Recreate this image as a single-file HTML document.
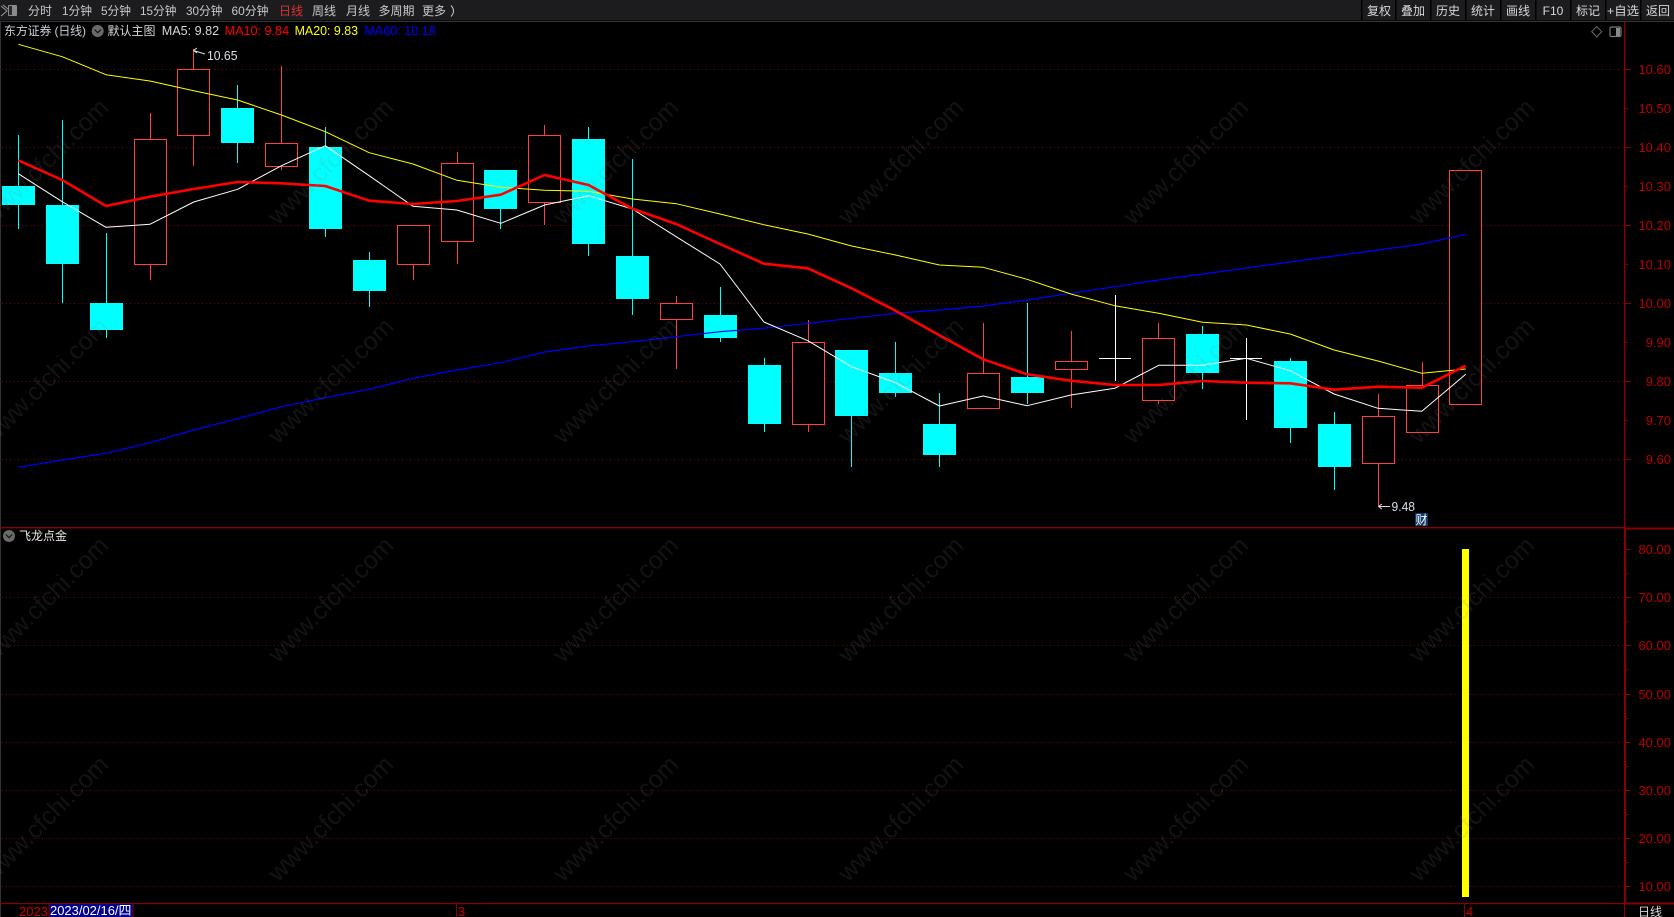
<!DOCTYPE html>
<html lang="zh"><head><meta charset="utf-8"><title>东方证券</title>
<style>
html,body{margin:0;padding:0;background:#000;width:1674px;height:917px;overflow:hidden}
svg{display:block;font-family:"Liberation Sans","Noto Sans CJK SC",sans-serif}
.g{stroke:#800000;stroke-width:1;stroke-dasharray:1 3;fill:none}
.c{fill:#0ff}.w{stroke:#0ff;stroke-width:1;fill:none}
.r{fill:#000;stroke:#ff4040;stroke-width:1}.rw{stroke:#ff4040;stroke-width:1;fill:none}
.ax{fill:#b80000;font-size:13px;text-anchor:end}
.m{fill:#c8c8c8;font-size:12px}
.b{fill:#d8d8d8;font-size:12px;text-anchor:middle}
.wm{fill:#808080;fill-opacity:.15;font-size:25px;text-anchor:end;font-family:"Liberation Sans",sans-serif}
</style></head><body>
<svg xmlns="http://www.w3.org/2000/svg" width="1674" height="917" viewBox="0 0 1674 917">
<rect width="1674" height="917" fill="#000"/>
<rect x="0" y="0" width="1674" height="20" fill="#1c1c1f"/>
<rect x="0" y="20" width="1674" height="1" fill="#0c0c0c"/>
<rect x="0" y="21" width="1674" height="1" fill="#333"/>
<rect x="0" y="22" width="1" height="895" fill="#333"/>

<!-- top bar -->
<path d="M1 6 L7 11 L1 16 M3 5 L8 9" stroke="#999" stroke-width="1" fill="none"/>
<rect x="8" y="5" width="9" height="11" rx="1" fill="#8a8a8a"/><rect x="9" y="6" width="3" height="9" fill="#2a2a2a"/>
<g class="m">
<text x="28" y="15">分时</text>
<text x="62" y="15" textLength="30" lengthAdjust="spacingAndGlyphs">1分钟</text>
<text x="101" y="15" textLength="30" lengthAdjust="spacingAndGlyphs">5分钟</text>
<text x="140" y="15" textLength="36.5" lengthAdjust="spacingAndGlyphs">15分钟</text>
<text x="186" y="15" textLength="36.5" lengthAdjust="spacingAndGlyphs">30分钟</text>
<text x="231.5" y="15" textLength="37" lengthAdjust="spacingAndGlyphs">60分钟</text>
<text x="279" y="15" style="fill:#e03030">日线</text>
<text x="312" y="15">周线</text>
<text x="346" y="15">月线</text>
<text x="378.5" y="15">多周期</text>
<text x="422" y="15">更多</text>
</g>
<path d="M451 5.5 Q456 11 451 16.5" stroke="#c8c8c8" fill="none"/>
<g fill="#000">
<rect x="1361" y="0" width="1.5" height="20"/><rect x="1395" y="0" width="1.5" height="20"/><rect x="1430" y="0" width="1.5" height="20"/><rect x="1465" y="0" width="1.5" height="20"/><rect x="1500" y="0" width="1.5" height="20"/><rect x="1535" y="0" width="1.5" height="20"/><rect x="1570" y="0" width="1.5" height="20"/><rect x="1605" y="0" width="1.5" height="20"/><rect x="1640" y="0" width="1.5" height="20"/>
</g>
<g class="b">
<text x="1379" y="15">复权</text><text x="1413" y="15">叠加</text><text x="1448" y="15">历史</text><text x="1483" y="15">统计</text><text x="1518" y="15">画线</text><text x="1553" y="15">F10</text><text x="1588" y="15">标记</text><text x="1623" y="15" textLength="32" lengthAdjust="spacingAndGlyphs">+自选</text><text x="1658" y="15">返回</text>
</g>

<!-- grid -->
<g class="g">
<path d="M2 69.5H1624M2 147.5H1624M2 225.5H1624M2 303.5H1624M2 381.5H1624M2 459.5H1624"/>
<path d="M2 597.5H1624M2 645.5H1624M2 694.5H1624M2 742.5H1624M2 790.5H1624M2 838.5H1624M2 886.5H1624"/>
</g>

<!-- cyan candles -->
<g class="w">
<path d="M18.5 135V229M62.5 120V303M106.5 233V338M237.5 85V163M325.5 127V237M369.5 252V307M500.5 170V229M588.5 127V256M632.5 159V315M720.5 287V342M764.5 358V432M851.5 350V467M895.5 342V397M939.5 393V467M1027.5 303V404M1202.5 326V389M1290.5 358V443M1334.5 412V490"/>
</g>
<g class="c">
<rect x="2" y="186" width="33" height="19"/><rect x="46" y="205" width="33" height="59"/><rect x="90" y="303" width="33" height="27"/><rect x="221" y="108" width="33" height="35"/><rect x="309" y="147" width="33" height="82"/><rect x="353" y="260" width="33" height="31"/><rect x="484" y="170" width="33" height="39"/><rect x="572" y="139" width="33" height="105"/><rect x="616" y="256" width="33" height="43"/><rect x="704" y="315" width="33" height="23"/><rect x="748" y="365" width="33" height="59"/><rect x="835" y="350" width="33" height="66"/><rect x="879" y="373" width="33" height="20"/><rect x="923" y="424" width="33" height="31"/><rect x="1011" y="377" width="33" height="16"/><rect x="1186" y="334" width="33" height="39"/><rect x="1274" y="361" width="33" height="67"/><rect x="1318" y="424" width="33" height="43"/>
</g>

<!-- red candles -->
<g class="rw">
<path d="M150.5 113V280M193.5 49V166M281.5 66V170M413.5 225V280M457.5 152V264M544.5 125V225M676.5 296V369M808.5 320V432M983.5 323V409M1071.5 331V408M1158.5 323V404M1378.5 394V507M1422.5 362V433"/>
</g>
<g class="r">
<rect x="134.5" y="139.5" width="32" height="125"/><rect x="177.5" y="69.5" width="32" height="66"/><rect x="265.5" y="143.5" width="32" height="23"/><rect x="397.5" y="225.5" width="32" height="39"/><rect x="441.5" y="163.5" width="32" height="78"/><rect x="528.5" y="135.5" width="32" height="67"/><rect x="660.5" y="303.5" width="32" height="16"/><rect x="792.5" y="342.5" width="32" height="82"/><rect x="967.5" y="373.5" width="32" height="35"/><rect x="1055.5" y="361.5" width="32" height="8"/><rect x="1142.5" y="338.5" width="32" height="62"/><rect x="1362.5" y="416.5" width="32" height="47"/><rect x="1406.5" y="385.5" width="32" height="47"/><rect x="1449.5" y="170.5" width="32" height="234"/>
</g>

<!-- doji -->
<path d="M1115.5 295V381M1099 358.5H1131M1246.5 338V420M1230 358.5H1262" stroke="#fff" fill="none"/>

<!-- MA lines -->
<g fill="none" stroke-linejoin="round">
<polyline stroke="#0000ff" stroke-width="1.2" points="18.3,467.3 62.2,460 106,453.3 149.9,442.7 193.7,430 237.6,418.7 281.5,406.7 325.3,397.7 369.2,389.3 413,378.3 456.9,370 500.8,362.7 544.6,352 588.5,346 632.3,341.7 676.2,336.7 720,331.7 763.9,328.3 807.8,323.3 851.6,318.3 895.5,313.3 939.4,310 983.2,306 1027.1,300 1070.9,293.3 1114.8,286.7 1158.7,280 1202.5,274 1246.4,268 1290.2,262 1334.1,256 1378,250 1421.8,244 1465.7,234.3"/>
<polyline stroke="#ffff00" stroke-width="1" points="18.3,44.3 62.2,56.7 106,74.7 149.9,81 193.7,90.7 237.6,100 281.5,115 325.3,131.7 369.2,152.7 413,164 456.9,180.3 500.8,187.3 544.6,190.3 588.5,191.3 632.3,199 676.2,203.7 720,214 763.9,224.7 807.8,234 851.6,246 895.5,255 939.4,265 983.2,267.3 1027.1,279.3 1070.9,294 1114.8,305.7 1158.7,313.3 1202.5,322.3 1246.4,325 1290.2,334 1334.1,350 1378,361 1421.8,373.3 1465.7,369"/>
<polyline stroke="#ffffff" stroke-width="1" points="18.3,173.7 62.2,201.7 106,227.3 149.9,224.3 193.7,202 237.6,189.3 281.5,165.7 325.3,145.7 369.2,175.7 413,206.3 456.9,210 500.8,223.3 544.6,205 588.5,195.7 632.3,209 676.2,236.7 720,264 763.9,322 807.8,340.7 851.6,366.7 895.5,382.7 939.4,406 983.2,396 1027.1,405.7 1070.9,395 1114.8,388.3 1158.7,365.3 1202.5,365.3 1246.4,358.3 1290.2,370.7 1334.1,394 1378,408.3 1421.8,411.3 1465.7,374.3"/>
<polyline stroke="#ff0000" stroke-width="2.6" points="18.3,160.3 62.2,180 106,206 149.9,196.7 193.7,189 237.6,182 281.5,183.3 325.3,186 369.2,200.7 413,204 456.9,201 500.8,194.7 544.6,175 588.5,185 632.3,208.7 676.2,224 720,244 763.9,263.7 807.8,268.3 851.6,288.3 895.5,310.7 939.4,335.3 983.2,359.3 1027.1,374.3 1070.9,380.7 1114.8,385 1158.7,385 1202.5,381 1246.4,382.7 1290.2,383.3 1334.1,389.7 1378,386.7 1421.8,387.7 1465.7,365.7"/>
</g>

<!-- high/low markers -->
<path d="M205 54 L193.5 50.5 M193.5 50.5 L197 48 M193.5 50.5 L197 53" stroke="#ddd" fill="none"/>
<text x="207" y="60" fill="#d8e0e8" font-size="13" textLength="30.5" lengthAdjust="spacingAndGlyphs">10.65</text>
<path d="M1378.5 506.5H1390M1378.5 506.5L1382 504M1378.5 506.5L1382 509" stroke="#ddd" fill="none"/>
<text x="1391.5" y="511" fill="#d8e0e8" font-size="13" textLength="23.5" lengthAdjust="spacingAndGlyphs">9.48</text>
<rect x="1415" y="513" width="13" height="13" fill="#10386a"/>
<text x="1415.5" y="524" fill="#fff" font-size="12">财</text>

<!-- yellow bar -->
<rect x="1462" y="549" width="7" height="348" fill="#ffff00"/>

<!-- info rows -->
<g font-size="12">
<text x="4" y="35" fill="#c8d0d8" textLength="82" lengthAdjust="spacing">东方证券 (日线)</text>
<circle cx="97.7" cy="31" r="6" fill="#6a6a6a"/><path d="M94.5 29.5L97.7 32.7L101 29.5" stroke="#111" stroke-width="1.2" fill="none"/>
<text x="107.5" y="35" fill="#d8d8d8">默认主图</text>
<text x="161.7" y="35" fill="#d8d8d8" font-size="13" textLength="57.5" lengthAdjust="spacingAndGlyphs">MA5: 9.82</text>
<text x="224.6" y="35" fill="#ff0000" font-size="13" textLength="64.5" lengthAdjust="spacingAndGlyphs">MA10: 9.84</text>
<text x="294.6" y="35" fill="#ffff00" font-size="13" textLength="63.5" lengthAdjust="spacingAndGlyphs">MA20: 9.83</text>
<text x="364.3" y="35" fill="#0000ff" font-size="13" textLength="71.5" lengthAdjust="spacingAndGlyphs">MA60: 10.18</text>
<circle cx="9" cy="536" r="6" fill="#6a6a6a"/><path d="M5.8 534.5L9 537.7L12.2 534.5" stroke="#111" stroke-width="1.2" fill="none"/>
<text x="19" y="540" fill="#e8e8e8">飞龙点金</text>
</g>
<path d="M1596.7 26.5L1601.7 31.7L1596.7 36.9L1591.7 31.7Z" fill="none" stroke="#6a6a6a"/>
<rect x="1610" y="27" width="11" height="9.5" rx="1.5" fill="none" stroke="#7a7a7a" stroke-width="1.2"/><rect x="1616" y="28" width="4" height="8" fill="#8a8a8a"/>

<!-- axes -->
<g fill="#8a0000">
<rect x="1624" y="22" width="1.4" height="506"/>
<rect x="1624" y="528" width="2" height="376"/>
<rect x="1624" y="904" width="1" height="13"/>
<rect x="0" y="527" width="1624" height="1.4"/>
<rect x="1624" y="527.5" width="50" height="2"/>
<rect x="0" y="903" width="1624" height="1.2"/>
<rect x="1624" y="902.5" width="50" height="2"/>
<rect x="456" y="904" width="1" height="13"/>
<rect x="1464" y="904" width="1" height="13"/>
</g>
<path d="M1625 69.5h6M1625 108.5h3M1625 147.5h6M1625 186.5h3M1625 225.5h6M1625 264.5h3M1625 303.5h6M1625 342.5h3M1625 381.5h6M1625 420.5h3M1625 459.5h6M1626 549.5h5M1626 573.5h2M1626 597.5h5M1626 621.5h2M1626 645.5h5M1626 669.5h2M1626 694.5h5M1626 718.5h2M1626 742.5h5M1626 766.5h2M1626 790.5h5M1626 814.5h2M1626 838.5h5M1626 862.5h2M1626 886.5h5" stroke="#8a0000" fill="none"/>
<g class="ax">
<text x="1671" y="74">10.60</text><text x="1671" y="113">10.50</text><text x="1671" y="152">10.40</text><text x="1671" y="191">10.30</text><text x="1671" y="230">10.20</text><text x="1671" y="269">10.10</text><text x="1671" y="308">10.00</text><text x="1671" y="347">9.90</text><text x="1671" y="386">9.80</text><text x="1671" y="425">9.70</text><text x="1671" y="464">9.60</text>
<text x="1671" y="554">80.00</text><text x="1671" y="602">70.00</text><text x="1671" y="650">60.00</text><text x="1671" y="699">50.00</text><text x="1671" y="747">40.00</text><text x="1671" y="795">30.00</text><text x="1671" y="843">20.00</text><text x="1671" y="891">10.00</text>
</g>

<!-- bottom axis -->
<text x="19" y="916" fill="#c80000" font-size="13">2023</text>
<rect x="49" y="904" width="84" height="13" fill="#00008c"/>
<rect x="48.5" y="904" width="1" height="13" fill="#8a0000"/><rect x="132.5" y="904" width="1" height="13" fill="#8a0000"/>
<text x="50" y="915" fill="#fff" font-size="13" textLength="81.5" lengthAdjust="spacingAndGlyphs">2023/02/16/四</text>
<text x="458" y="916" fill="#c80000" font-size="13">3</text>
<text x="1466" y="916" fill="#c80000" font-size="13">4</text>
<text x="1638" y="916" fill="#d8d8d8" font-size="12">日线</text>

<!-- watermark -->
<g class="wm">
<text x="110" y="109" transform="rotate(-45 110 109)">www.cfchi.com</text><text x="395" y="109" transform="rotate(-45 395 109)">www.cfchi.com</text><text x="680" y="109" transform="rotate(-45 680 109)">www.cfchi.com</text><text x="965" y="109" transform="rotate(-45 965 109)">www.cfchi.com</text><text x="1250" y="109" transform="rotate(-45 1250 109)">www.cfchi.com</text><text x="1536" y="109" transform="rotate(-45 1536 109)">www.cfchi.com</text>
<text x="110" y="328" transform="rotate(-45 110 328)">www.cfchi.com</text><text x="395" y="328" transform="rotate(-45 395 328)">www.cfchi.com</text><text x="680" y="328" transform="rotate(-45 680 328)">www.cfchi.com</text><text x="965" y="328" transform="rotate(-45 965 328)">www.cfchi.com</text><text x="1250" y="328" transform="rotate(-45 1250 328)">www.cfchi.com</text><text x="1536" y="328" transform="rotate(-45 1536 328)">www.cfchi.com</text>
<text x="110" y="547" transform="rotate(-45 110 547)">www.cfchi.com</text><text x="395" y="547" transform="rotate(-45 395 547)">www.cfchi.com</text><text x="680" y="547" transform="rotate(-45 680 547)">www.cfchi.com</text><text x="965" y="547" transform="rotate(-45 965 547)">www.cfchi.com</text><text x="1250" y="547" transform="rotate(-45 1250 547)">www.cfchi.com</text><text x="1536" y="547" transform="rotate(-45 1536 547)">www.cfchi.com</text>
<text x="110" y="766" transform="rotate(-45 110 766)">www.cfchi.com</text><text x="395" y="766" transform="rotate(-45 395 766)">www.cfchi.com</text><text x="680" y="766" transform="rotate(-45 680 766)">www.cfchi.com</text><text x="965" y="766" transform="rotate(-45 965 766)">www.cfchi.com</text><text x="1250" y="766" transform="rotate(-45 1250 766)">www.cfchi.com</text><text x="1536" y="766" transform="rotate(-45 1536 766)">www.cfchi.com</text>
</g>
</svg>
</body></html>
